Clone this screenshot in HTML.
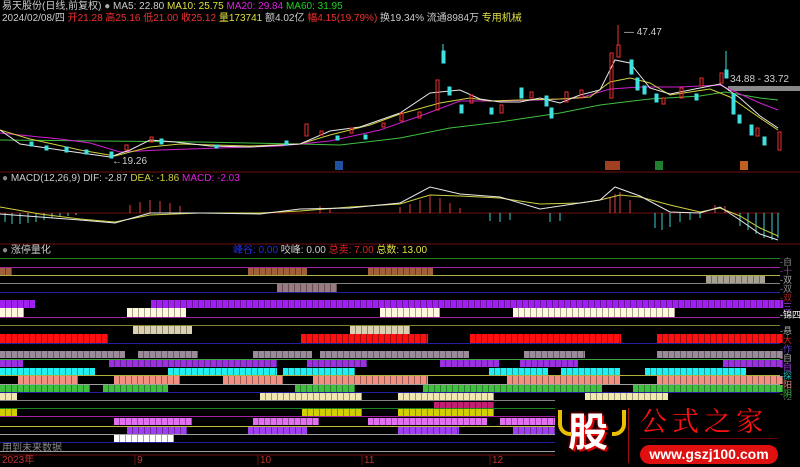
<!DOCTYPE html>
<html><head><meta charset="utf-8"><style>
body{margin:0;background:#000;width:800px;height:465px;overflow:hidden;position:relative;font-family:"Liberation Sans","Noto Sans CJK SC",sans-serif;font-size:10px;}
.a{position:absolute;}
.t{position:absolute;white-space:nowrap;font-size:10px;line-height:12px;}
.l{position:absolute;height:1px;left:0;width:780px;}
.s{position:absolute;background-image:repeating-linear-gradient(90deg,transparent 0,transparent 5px,rgba(0,0,0,.35) 5px,rgba(0,0,0,.35) 6px);}
.rl{position:absolute;left:780px;font-size:9px;line-height:9px;white-space:nowrap;}
</style></head><body>
<div class="t" style="left:2px;top:1px;color:#ccc">易天股份(日线,前复权) <span style="color:#aaa">●</span> MA5: 22.80 <span style="color:#e0e040">MA10: 25.75</span> <span style="color:#e020e0">MA20: 29.84</span> <span style="color:#20d020">MA60: 31.95</span></div>
<div class="t" style="left:2px;top:13px;color:#ccc">2024/02/08/四 <span style="color:#f03030">开21.28 高25.16 低21.00 收25.12</span> <span style="color:#e0e040">量173741</span> 额4.02亿 <span style="color:#f03030">幅4.15(19.79%)</span> 换19.34% 流通8984万 <span style="color:#e0e040">专用机械</span></div>

<svg class="a" style="left:0;top:0" width="800" height="465">
<rect x="728" y="86" width="72" height="5" fill="#888"/>
<g fill="none" stroke-width="1">
<polyline stroke="#40c040" points="0,140 100,141 200,142 300,144 340,145 400,138 450,128 500,122 560,113 600,105 650,99 700,96 725,92 760,98 778,100"/>
<polyline stroke="#d020d0" points="0,133 60,139 90,143 120,152 160,150 220,148 280,146 330,141 380,130 420,116 460,101 500,101 540,100 580,98 610,89 640,87 680,87 720,85 760,103 778,110"/>
<polyline stroke="#d0d040" points="0,130 30,139 80,150 115,156 150,147 180,144 250,146 300,144 330,135 370,125 400,114 440,103 470,98 490,101 520,100 560,99 590,97 610,82 630,78 650,83 670,95 690,92 710,89 730,97 760,118 778,130"/>
<polyline stroke="#e8e8e8" points="0,130 20,144 60,150 110,157 130,150 150,140 175,142 210,146 250,147 300,144 330,131 360,127 400,113 430,93 460,90 480,99 500,102 520,102 540,98 560,103 580,95 600,90 615,60 630,63 650,88 670,94 690,90 720,84 740,98 760,116 778,128"/>
</g>
<g stroke-width="1">
<g fill="#40e0e0" stroke="#40e0e0">
<rect x="30" y="142" width="3" height="4"/><rect x="45" y="146" width="3" height="4"/><rect x="65" y="147" width="3" height="5"/><rect x="85" y="150" width="3" height="4"/><rect x="110" y="152" width="3" height="6"/><rect x="160" y="139" width="3" height="5"/><rect x="215" y="145" width="3" height="3"/><rect x="285" y="141" width="3" height="4"/><rect x="336" y="136" width="3" height="4"/><rect x="364" y="135" width="3" height="4"/><rect x="442" y="51" width="3" height="12"/><rect x="448" y="87" width="3" height="8"/><rect x="460" y="105" width="3" height="8"/><rect x="490" y="108" width="3" height="6"/><rect x="520" y="88" width="3" height="10"/><rect x="545" y="96" width="3" height="10"/><rect x="550" y="108" width="3" height="10"/><rect x="630" y="60" width="3" height="14"/><rect x="636" y="78" width="3" height="12"/><rect x="643" y="86" width="3" height="8"/><rect x="655" y="94" width="3" height="8"/><rect x="695" y="94" width="3" height="6"/><rect x="725" y="70" width="3" height="8"/><rect x="732" y="94" width="3" height="20"/><rect x="738" y="115" width="3" height="8"/><rect x="750" y="125" width="3" height="10"/><rect x="763" y="137" width="3" height="8"/></g>
<line x1="443" y1="63" x2="443" y2="44" stroke="#40e0e0"/><line x1="726" y1="70" x2="726" y2="51" stroke="#40e0e0"/>
<g fill="none" stroke="#f03030">
<rect x="125" y="145" width="3" height="5"/><rect x="150" y="137" width="3" height="5"/><rect x="305" y="124" width="3" height="12"/><rect x="320" y="131" width="3" height="4"/><rect x="350" y="128" width="3" height="5"/><rect x="382" y="123" width="3" height="4"/><rect x="400" y="113" width="3" height="8"/><rect x="418" y="112" width="3" height="6"/><rect x="436" y="80" width="3" height="30"/><rect x="470" y="95" width="3" height="8"/><rect x="500" y="105" width="3" height="8"/><rect x="530" y="92" width="3" height="6"/><rect x="565" y="92" width="3" height="10"/><rect x="580" y="90" width="3" height="8"/><rect x="610" y="53" width="3" height="45"/><rect x="617" y="45" width="3" height="12"/><rect x="662" y="98" width="3" height="6"/><rect x="680" y="88" width="3" height="10"/><rect x="700" y="78" width="3" height="8"/><rect x="720" y="73" width="3" height="10"/><rect x="756" y="128" width="3" height="8"/><rect x="778" y="132" width="3" height="18"/></g>
<line x1="618" y1="25" x2="618" y2="45" stroke="#f03030"/>
</g>
<text x="624" y="35" fill="#ccc" font-size="10" font-family="Liberation Sans">— 47.47</text>
<text x="112" y="164" fill="#ccc" font-size="10" font-family="Liberation Sans">←19.26</text>
<text x="730" y="82" fill="#ccc" font-size="10" font-family="Liberation Sans">34.88 - 33.72</text>
<rect x="335" y="161" width="8" height="9" fill="#2050a0"/><rect x="605" y="161" width="15" height="9" fill="#a04020"/><rect x="655" y="161" width="8" height="9" fill="#208030"/><rect x="740" y="161" width="8" height="9" fill="#c06020"/>
<line x1="0" y1="172" x2="800" y2="172" stroke="#701010"/>
<line x1="0" y1="213" x2="780" y2="213" stroke="#701010"/>
<g stroke="#e04040"><line x1="130" y1="213" x2="130" y2="205"/><line x1="140" y1="213" x2="140" y2="202"/><line x1="150" y1="213" x2="150" y2="200"/><line x1="160" y1="213" x2="160" y2="201"/><line x1="170" y1="213" x2="170" y2="203"/><line x1="180" y1="213" x2="180" y2="206"/><line x1="320" y1="213" x2="320" y2="206"/><line x1="330" y1="213" x2="330" y2="208"/><line x1="400" y1="213" x2="400" y2="207"/><line x1="410" y1="213" x2="410" y2="204"/><line x1="420" y1="213" x2="420" y2="200"/><line x1="430" y1="213" x2="430" y2="196"/><line x1="440" y1="213" x2="440" y2="198"/><line x1="450" y1="213" x2="450" y2="203"/><line x1="460" y1="213" x2="460" y2="208"/><line x1="610" y1="213" x2="610" y2="198"/><line x1="615" y1="213" x2="615" y2="194"/><line x1="620" y1="213" x2="620" y2="192"/><line x1="630" y1="213" x2="630" y2="200"/><line x1="715" y1="213" x2="715" y2="205"/><line x1="725" y1="213" x2="725" y2="206"/></g>
<g stroke="#40d0d0"><line x1="5" y1="213" x2="5" y2="222"/><line x1="12" y1="213" x2="12" y2="224"/><line x1="20" y1="213" x2="20" y2="224"/><line x1="28" y1="213" x2="28" y2="223"/><line x1="36" y1="213" x2="36" y2="222"/><line x1="44" y1="213" x2="44" y2="220"/><line x1="52" y1="213" x2="52" y2="218"/><line x1="60" y1="213" x2="60" y2="217"/><line x1="68" y1="213" x2="68" y2="216"/><line x1="76" y1="213" x2="76" y2="215"/><line x1="490" y1="213" x2="490" y2="221"/><line x1="500" y1="213" x2="500" y2="222"/><line x1="510" y1="213" x2="510" y2="220"/><line x1="550" y1="213" x2="550" y2="222"/><line x1="560" y1="213" x2="560" y2="221"/><line x1="655" y1="213" x2="655" y2="228"/><line x1="662" y1="213" x2="662" y2="230"/><line x1="670" y1="213" x2="670" y2="227"/><line x1="680" y1="213" x2="680" y2="222"/><line x1="690" y1="213" x2="690" y2="220"/><line x1="700" y1="213" x2="700" y2="218"/><line x1="740" y1="213" x2="740" y2="226"/><line x1="748" y1="213" x2="748" y2="230"/><line x1="756" y1="213" x2="756" y2="234"/><line x1="764" y1="213" x2="764" y2="238"/><line x1="772" y1="213" x2="772" y2="240"/><line x1="778" y1="213" x2="778" y2="238"/></g>
<polyline fill="none" stroke="#d0d040" points="0,207 40,214 80,219 115,222 150,215 200,213 260,213 300,211 350,207 400,204 430,195 460,196 500,198 540,204 580,203 600,200 620,195 640,197 670,205 700,212 720,208 740,216 760,228 778,236"/>
<polyline fill="none" stroke="#e8e8e8" points="0,214 40,217 80,220 115,223 150,213 200,213 260,214 300,209 350,208 400,203 430,187 460,194 500,197 540,209 580,203 600,200 615,187 640,196 670,212 700,213 720,207 740,220 760,234 778,240"/>
<line x1="0" y1="244" x2="800" y2="244" stroke="#701010"/>
<line x1="0" y1="455" x2="555" y2="455" stroke="#701010"/>
<g stroke="#701010"><line x1="135" y1="455" x2="135" y2="465"/><line x1="258" y1="455" x2="258" y2="465"/><line x1="362" y1="455" x2="362" y2="465"/><line x1="490" y1="455" x2="490" y2="465"/></g>
</svg>

<div class="t" style="left:2px;top:173px;color:#ccc"><span style="color:#888">●</span> MACD(12,26,9) DIF: -2.87 <span style="color:#d0d040">DEA: -1.86</span> <span style="color:#e020e0">MACD: -2.03</span></div>
<div class="t" style="left:2px;top:245px;color:#ccc"><span style="color:#888">●</span> 涨停量化</div>
<div class="t" style="left:233px;top:245px;color:#ccc"><span style="color:#2030e0">峰谷: 0.00</span> 咬峰: 0.00 <span style="color:#e02020">总卖: 7.00</span> <span style="color:#e0e040">总数: 13.00</span></div>

<div class="l" style="top:258px;background:#208020"></div>
<div class="l" style="top:267px;background:#a020a0"></div>
<div class="l" style="top:275px;background:#b0b040"></div>
<div class="l" style="top:283px;background:#808080"></div>
<div class="l" style="top:292px;background:#2020a0"></div>
<div class="l" style="top:317px;background:#a020a0"></div>
<div class="l" style="top:325px;background:#808030"></div>
<div class="l" style="top:343px;background:#2020a0"></div>
<div class="l" style="top:359px;background:#40a040"></div>
<div class="l" style="top:375px;background:#b0b040"></div>
<div class="l" style="top:384px;background:#a0a0a0"></div>
<div class="l" style="top:392px;background:#2020a0"></div>
<div class="l" style="top:400px;background:#808080;width:555px"></div>
<div class="l" style="top:408px;background:#208020;width:555px"></div>
<div class="l" style="top:416px;background:#a020a0;width:555px"></div>
<div class="l" style="top:426px;background:#c0c040;width:555px"></div>
<div class="l" style="top:434px;background:#a0a0a0;width:555px"></div>
<div class="l" style="top:442px;background:#2020a0;width:555px"></div>
<div class="l" style="top:451px;background:#a0a0a0;width:555px"></div>

<div class="s" style="top:268px;height:7px;left:0;width:12px;background-color:#a0603a"></div>
<div class="s" style="top:268px;height:7px;left:248px;width:59px;background-color:#a0603a"></div>
<div class="s" style="top:268px;height:7px;left:368px;width:65px;background-color:#a0603a"></div>
<div class="s" style="top:284px;height:8px;left:277px;width:60px;background-color:#9a7a80"></div>
<div class="s" style="top:276px;height:7px;left:706px;width:59px;background-color:#a8a090"></div>
<div class="s" style="top:300px;height:8px;left:0;width:35px;background-color:#a020f0"></div>
<div class="s" style="top:300px;height:8px;left:151px;width:632px;background-color:#a020f0"></div>
<div class="s" style="top:308px;height:9px;left:0;width:24px;background-color:#fff8dc"></div>
<div class="s" style="top:308px;height:9px;left:127px;width:59px;background-color:#fff8dc"></div>
<div class="s" style="top:308px;height:9px;left:380px;width:60px;background-color:#fff8dc"></div>
<div class="s" style="top:308px;height:9px;left:513px;width:162px;background-color:#fff8dc"></div>
<div class="s" style="top:326px;height:8px;left:133px;width:59px;background-color:#d8d0b0"></div>
<div class="s" style="top:326px;height:8px;left:350px;width:60px;background-color:#d8d0b0"></div>
<div class="s" style="top:334px;height:9px;left:0;width:108px;background-color:#ff1010"></div>
<div class="s" style="top:334px;height:9px;left:301px;width:127px;background-color:#ff1010"></div>
<div class="s" style="top:334px;height:9px;left:470px;width:151px;background-color:#ff1010"></div>
<div class="s" style="top:334px;height:9px;left:657px;width:126px;background-color:#ff1010"></div>

<div class="s" style="top:351px;height:7px;left:0;width:125px;background-color:#9a8a9a"></div>
<div class="s" style="top:351px;height:7px;left:138px;width:60px;background-color:#9a8a9a"></div>
<div class="s" style="top:351px;height:7px;left:253px;width:59px;background-color:#9a8a9a"></div>
<div class="s" style="top:351px;height:7px;left:320px;width:149px;background-color:#9a8a9a"></div>
<div class="s" style="top:351px;height:7px;left:524px;width:61px;background-color:#9a8a9a"></div>
<div class="s" style="top:351px;height:7px;left:657px;width:126px;background-color:#9a8a9a"></div>
<div class="s" style="top:360px;height:7px;left:0;width:23px;background-color:#9a30e0"></div>
<div class="s" style="top:360px;height:7px;left:109px;width:168px;background-color:#9a30e0"></div>
<div class="s" style="top:360px;height:7px;left:307px;width:60px;background-color:#9a30e0"></div>
<div class="s" style="top:360px;height:7px;left:440px;width:59px;background-color:#9a30e0"></div>
<div class="s" style="top:360px;height:7px;left:520px;width:58px;background-color:#9a30e0"></div>
<div class="s" style="top:360px;height:7px;left:723px;width:60px;background-color:#9a30e0"></div>
<div class="s" style="top:368px;height:7px;left:0;width:95px;background-color:#20f0f0"></div>
<div class="s" style="top:368px;height:7px;left:168px;width:109px;background-color:#20f0f0"></div>
<div class="s" style="top:368px;height:7px;left:283px;width:72px;background-color:#20f0f0"></div>
<div class="s" style="top:368px;height:7px;left:489px;width:59px;background-color:#20f0f0"></div>
<div class="s" style="top:368px;height:7px;left:561px;width:59px;background-color:#20f0f0"></div>
<div class="s" style="top:368px;height:7px;left:645px;width:101px;background-color:#20f0f0"></div>
<div class="s" style="top:376px;height:8px;left:18px;width:60px;background-color:#f09080"></div>
<div class="s" style="top:376px;height:8px;left:114px;width:66px;background-color:#f09080"></div>
<div class="s" style="top:376px;height:8px;left:223px;width:60px;background-color:#f09080"></div>
<div class="s" style="top:376px;height:8px;left:313px;width:115px;background-color:#f09080"></div>
<div class="s" style="top:376px;height:8px;left:507px;width:113px;background-color:#f09080"></div>
<div class="s" style="top:376px;height:8px;left:657px;width:126px;background-color:#f09080"></div>
<div class="s" style="top:385px;height:7px;left:0;width:90px;background-color:#40c040"></div>
<div class="s" style="top:385px;height:7px;left:103px;width:65px;background-color:#40c040"></div>
<div class="s" style="top:385px;height:7px;left:295px;width:60px;background-color:#40c040"></div>
<div class="s" style="top:385px;height:7px;left:423px;width:179px;background-color:#40c040"></div>
<div class="s" style="top:385px;height:7px;left:633px;width:150px;background-color:#40c040"></div>
<div class="s" style="top:393px;height:7px;left:0;width:17px;background-color:#f0e8b0"></div>
<div class="s" style="top:393px;height:7px;left:260px;width:102px;background-color:#f0e8b0"></div>
<div class="s" style="top:393px;height:7px;left:398px;width:96px;background-color:#f0e8b0"></div>
<div class="s" style="top:393px;height:7px;left:585px;width:83px;background-color:#f0e8b0"></div>
<div class="s" style="top:402px;height:6px;left:434px;width:60px;background-color:#c02070"></div>
<div class="s" style="top:409px;height:7px;left:0;width:17px;background-color:#d0d000"></div>
<div class="s" style="top:409px;height:7px;left:302px;width:60px;background-color:#d0d000"></div>
<div class="s" style="top:409px;height:7px;left:398px;width:96px;background-color:#d0d000"></div>
<div class="s" style="top:418px;height:7px;left:114px;width:78px;background-color:#e070f0"></div>
<div class="s" style="top:418px;height:7px;left:253px;width:66px;background-color:#e070f0"></div>
<div class="s" style="top:418px;height:7px;left:368px;width:119px;background-color:#e070f0"></div>
<div class="s" style="top:418px;height:7px;left:500px;width:55px;background-color:#e070f0"></div>
<div class="s" style="top:427px;height:7px;left:127px;width:60px;background-color:#a040f0"></div>
<div class="s" style="top:427px;height:7px;left:248px;width:59px;background-color:#a040f0"></div>
<div class="s" style="top:427px;height:7px;left:398px;width:61px;background-color:#a040f0"></div>
<div class="s" style="top:427px;height:7px;left:513px;width:42px;background-color:#a040f0"></div>
<div class="s" style="top:435px;height:7px;left:114px;width:60px;background-color:#ffffff"></div>
<div class="t" style="left:2px;top:443px;color:#888">用到未来数据</div>
<div class="t" style="left:2px;top:455px;color:#c03030">2023年</div>
<div class="t" style="left:137px;top:455px;color:#c03030">9</div>
<div class="t" style="left:260px;top:455px;color:#c03030">10</div>
<div class="t" style="left:364px;top:455px;color:#c03030">11</div>
<div class="t" style="left:492px;top:455px;color:#c03030">12</div>

<div class="rl" style="top:258px;color:#888">-自</div>
<div class="rl" style="top:267px;color:#a040a0">-十</div>
<div class="rl" style="top:276px;color:#aaa">-双</div>
<div class="rl" style="top:285px;color:#888">-双</div>
<div class="rl" style="top:294px;color:#a02020">-双</div>
<div class="rl" style="top:303px;color:#a040e0">-三</div>
<div class="rl" style="top:311px;color:#fff">-锦四</div>
<div class="rl" style="top:327px;color:#aaa">-悬</div>
<div class="rl" style="top:336px;color:#e02020">-大</div>
<div class="rl" style="top:345px;color:#6040c0">-作</div>
<div class="rl" style="top:354px;color:#aaa">-自</div>
<div class="rl" style="top:363px;color:#a040e0">-自</div>
<div class="rl" style="top:372px;color:#20c0c0">-探</div>
<div class="rl" style="top:381px;color:#f09080">-阳</div>
<div class="rl" style="top:390px;color:#40c040">-阴</div>
<div class="rl" style="top:399px;color:#888">-均</div>

<div class="a" style="left:555px;top:400px;width:245px;height:65px;background:#000"></div>
<div class="a" style="left:568px;top:404px;font-size:40px;line-height:50px;font-weight:bold;color:#fff;text-shadow:0 0 3px #f00,2px 2px 0 #c00;font-family:'Noto Sans CJK SC',sans-serif">股</div>
<div class="a" style="left:558px;top:410px;width:10px;height:22px;border-left:4px solid #e8c000;border-bottom:4px solid #e8c000;border-radius:0 0 0 12px"></div>
<div class="a" style="left:612px;top:410px;width:10px;height:22px;border-right:4px solid #e8c000;border-bottom:4px solid #e8c000;border-radius:0 0 12px 0"></div>
<div class="a" style="left:628px;top:408px;width:1px;height:55px;background:#a01010"></div>
<div class="a" style="left:640px;top:403px;font-size:27px;line-height:34px;color:#ff1010;letter-spacing:5px;font-family:'Noto Serif CJK SC','Noto Sans CJK SC',serif">公式之家</div>
<div class="a" style="left:640px;top:438px;width:138px;height:1px;background:#600"></div>
<div class="a" style="left:640px;top:445px;width:138px;height:19px;border-radius:10px;background:#e01010;color:#fff;font-size:14px;line-height:19px;text-align:center;font-weight:bold;font-family:'Liberation Sans',sans-serif">www.gszj100.com</div>
</body></html>
